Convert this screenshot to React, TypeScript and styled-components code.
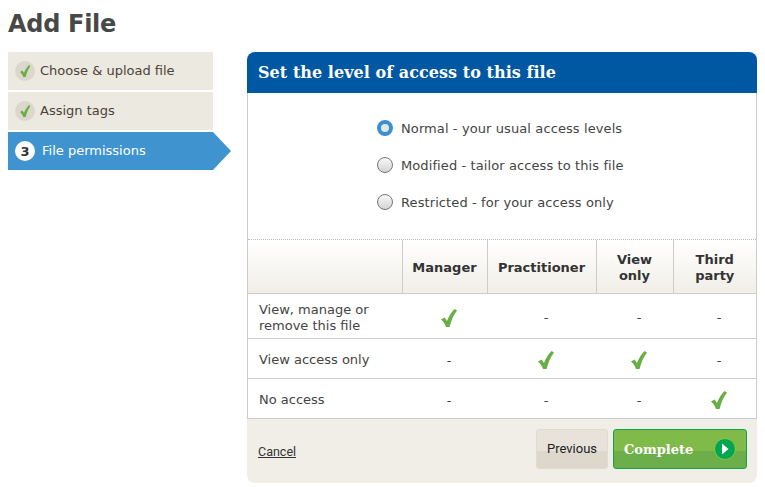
import styled, { createGlobalStyle } from 'styled-components'

const GlobalStyle = createGlobalStyle`
  html, body {
    margin: 0;
    background: #fff;
  }
  body {
    font-family: "DejaVu Sans", Verdana, sans-serif;
    font-size: 13px;
    color: #444;
  }
`

const Page = styled.div`
  width: 765px;
  height: 487px;
  box-sizing: border-box;
  padding: 8px 8px 0;
  overflow: hidden;
`

const Title = styled.h1`
  margin: 0 0 12px;
  padding-top: 1px;
  font-size: 24px;
  line-height: 31px;
  letter-spacing: -0.3px;
  font-weight: 700;
  color: #484848;
`

const Layout = styled.div`
  display: flex;
  align-items: flex-start;
  gap: 34px;
`

const Steps = styled.ol`
  list-style: none;
  margin: 0;
  padding: 0;
  width: 205px;
  flex: none;
  display: flex;
  flex-direction: column;
  gap: 2px;
`

const Step = styled.li<{ $active?: boolean }>`
  position: relative;
  height: 38px;
  display: flex;
  align-items: center;
  gap: ${({ $active }) => ($active ? '7px' : '5px')};
  padding-left: 7px;
  background: ${({ $active }) => ($active ? '#3f94cf' : '#ece9e1')};
  color: ${({ $active }) => ($active ? '#fff' : '#4a4238')};
  font-size: 13px;

  ${({ $active }) =>
    $active &&
    `
    &::after {
      content: '';
      position: absolute;
      left: 100%;
      top: 0;
      border-left: 18px solid #3f94cf;
      border-top: 19px solid transparent;
      border-bottom: 19px solid transparent;
    }
  `}
`

const StepLabel = styled.span`
  padding-bottom: 2px;
`

const StepBadge = styled.span<{ $done?: boolean }>`
  width: 20px;
  height: 20px;
  border-radius: 50%;
  flex: none;
  display: flex;
  align-items: center;
  justify-content: center;
  background: ${({ $done }) => ($done ? '#dcd7cc' : '#fff')};
  color: #333;
  font-size: 13px;
  font-weight: 700;
`

const Panel = styled.section`
  width: 510px;
  flex: none;
  border-radius: 8px;
  overflow: hidden;
  background: #f1eee7;
`

const PanelHeader = styled.h2`
  margin: 0;
  height: 41px;
  box-sizing: border-box;
  padding: 0 11px;
  display: flex;
  align-items: center;
  background: #0058a3;
  color: #fff;
  font-family: "DejaVu Serif", Georgia, serif;
  font-size: 16px;
  letter-spacing: 0.05px;
  font-weight: 700;
`

const PanelBody = styled.div`
  background: #fff;
  border-left: 1px solid #ccc;
  border-right: 1px solid #ccc;
`

const AccessOptions = styled.div`
  height: 147px;
  box-sizing: border-box;
  padding: 25px 0 0 129px;
  display: flex;
  flex-direction: column;
  gap: 17px;
  border-bottom: 1px dotted #bbb;
`

const AccessOption = styled.label`
  height: 20px;
  display: flex;
  align-items: center;
  gap: 8px;
  font-size: 13px;
  letter-spacing: 0.1px;
  color: #444;
`

const Radio = styled.span<{ $checked?: boolean }>`
  width: 16px;
  height: 16px;
  box-sizing: border-box;
  border-radius: 50%;
  flex: none;
  border: ${({ $checked }) => ($checked ? '4px solid #3f8fcd' : '1px solid #777')};
  background: ${({ $checked }) =>
    $checked ? '#dfe8ef' : 'linear-gradient(#f8f8f8, #d4d4d4)'};
`

const AccessTable = styled.table`
  width: 100%;
  border-collapse: collapse;
  table-layout: fixed;
  font-size: 13px;
`

const HeadCell = styled.th`
  height: 53px;
  box-sizing: border-box;
  padding: 4px 0 0;
  border-left: 1px solid #ccc;
  border-bottom: 1px solid #ccc;
  background: linear-gradient(#fff, #f1eee7);
  color: #333;
  font-weight: 700;
  line-height: 16px;
  text-align: center;

  &:first-child {
    border-left: 0;
  }
`

const Row = styled.tr<{ $height: number }>`
  height: ${({ $height }) => $height}px;
  border-bottom: 1px solid #ccc;
`

const RowLabel = styled.td`
  padding: 4px 0 0 11px;
  line-height: 16px;
  color: #444;
`

const Cell = styled.td`
  padding: 4px 0 0 9px;
  text-align: center;
  color: #444;
`

const Tick = styled.span`
  display: block;
  height: 18px;
`

const Footer = styled.div`
  height: 64px;
  box-sizing: border-box;
  padding: 10px 10px 0 11px;
  display: flex;
  align-items: flex-start;
  justify-content: space-between;
`

const CancelLink = styled.a`
  margin-top: 15px;
  font-family: Roboto, "Liberation Sans", sans-serif;
  font-size: 12.5px;
  line-height: 16px;
  color: #333;
  text-decoration: underline;
`

const Actions = styled.div`
  display: flex;
  gap: 5px;
`

const PreviousButton = styled.button`
  width: 72px;
  height: 40px;
  padding: 0;
  border: 1px solid #e0dbd0;
  border-radius: 3px;
  background: linear-gradient(#e7e3da 0 55%, #ded8cc 55%);
  color: #222;
  font-family: Roboto, "Liberation Sans", sans-serif;
  font-size: 13px;
`

const CompleteButton = styled.button`
  width: 134px;
  height: 40px;
  box-sizing: border-box;
  padding: 0 10px;
  display: flex;
  align-items: center;
  justify-content: space-between;
  border: 1px solid #0fa650;
  border-radius: 3px;
  background: linear-gradient(#80ba48 0 55%, #6cae4a 55%);
  color: #fff;
  font-family: "DejaVu Serif", Georgia, serif;
  font-size: 13px;
  font-weight: 700;
`

const CompleteLabel = styled.span`
  padding-top: 2px;
`

const ArrowCircle = styled.svg`
  flex: none;
`

function CheckMark({ height }: { height: number }) {
  return (
    <svg width={(height * 16) / 18} height={height} viewBox="0 0 16 18" aria-hidden="true">
      <path
        d="M0 10.5 L3.6 8.4 L6 12 C7.6 7.6 10.4 3 13.6 0 L16 1.4 C12.4 6.2 10 12 8.6 18 L5 18 C4 15 2.2 12.4 0 10.5 Z"
        fill="#69ae45"
      />
    </svg>
  )
}

const columns = ['Manager', 'Practitioner', 'View only', 'Third party']

const rows = [
  { label: 'View, manage or remove this file', height: 45, access: [true, false, false, false] },
  { label: 'View access only', height: 40, access: [false, true, true, false] },
  { label: 'No access', height: 40, access: [false, false, false, true] },
]

const options = [
  { label: 'Normal - your usual access levels', checked: true },
  { label: 'Modified - tailor access to this file', checked: false },
  { label: 'Restricted - for your access only', checked: false },
]

export default function App() {
  return (
    <>
      <GlobalStyle />
      <Page>
        <Title>Add File</Title>
        <Layout>
          <Steps>
            <Step>
              <StepBadge $done><CheckMark height={12} /></StepBadge>
              <StepLabel>Choose &amp; upload file</StepLabel>
            </Step>
            <Step>
              <StepBadge $done><CheckMark height={12} /></StepBadge>
              <StepLabel>Assign tags</StepLabel>
            </Step>
            <Step $active>
              <StepBadge>3</StepBadge>
              <StepLabel>File permissions</StepLabel>
            </Step>
          </Steps>
          <Panel>
            <PanelHeader>Set the level of access to this file</PanelHeader>
            <PanelBody>
              <AccessOptions>
                {options.map((option) => (
                  <AccessOption key={option.label}>
                    <Radio $checked={option.checked} />
                    {option.label}
                  </AccessOption>
                ))}
              </AccessOptions>
              <AccessTable>
                <colgroup>
                  <col style={{ width: 154 }} />
                  <col style={{ width: 85 }} />
                  <col style={{ width: 109 }} />
                  <col style={{ width: 77 }} />
                  <col />
                </colgroup>
                <thead>
                  <tr>
                    <HeadCell />
                    {columns.map((column) => (
                      <HeadCell key={column}>
                        {column.includes(' ') ? (
                          <>
                            {column.split(' ')[0]}
                            <br />
                            {column.split(' ')[1]}
                          </>
                        ) : (
                          column
                        )}
                      </HeadCell>
                    ))}
                  </tr>
                </thead>
                <tbody>
                  {rows.map((row) => (
                    <Row key={row.label} $height={row.height}>
                      <RowLabel>{row.label}</RowLabel>
                      {row.access.map((allowed, index) => (
                        <Cell key={index}>
                          {allowed ? (
                            <Tick><CheckMark height={18} /></Tick>
                          ) : (
                            '-'
                          )}
                        </Cell>
                      ))}
                    </Row>
                  ))}
                </tbody>
              </AccessTable>
            </PanelBody>
            <Footer>
              <CancelLink href="#">Cancel</CancelLink>
              <Actions>
                <PreviousButton>Previous</PreviousButton>
                <CompleteButton>
                  <CompleteLabel>Complete</CompleteLabel>
                  <ArrowCircle width="22" height="22" viewBox="0 0 22 22" aria-hidden="true">
                    <circle cx="11" cy="11" r="10.5" fill="#00a651" stroke="#8cc63f" />
                    <path d="M8 5.5 L14.5 11 L8 16.5 Z" fill="#fff" />
                  </ArrowCircle>
                </CompleteButton>
              </Actions>
            </Footer>
          </Panel>
        </Layout>
      </Page>
    </>
  )
}
